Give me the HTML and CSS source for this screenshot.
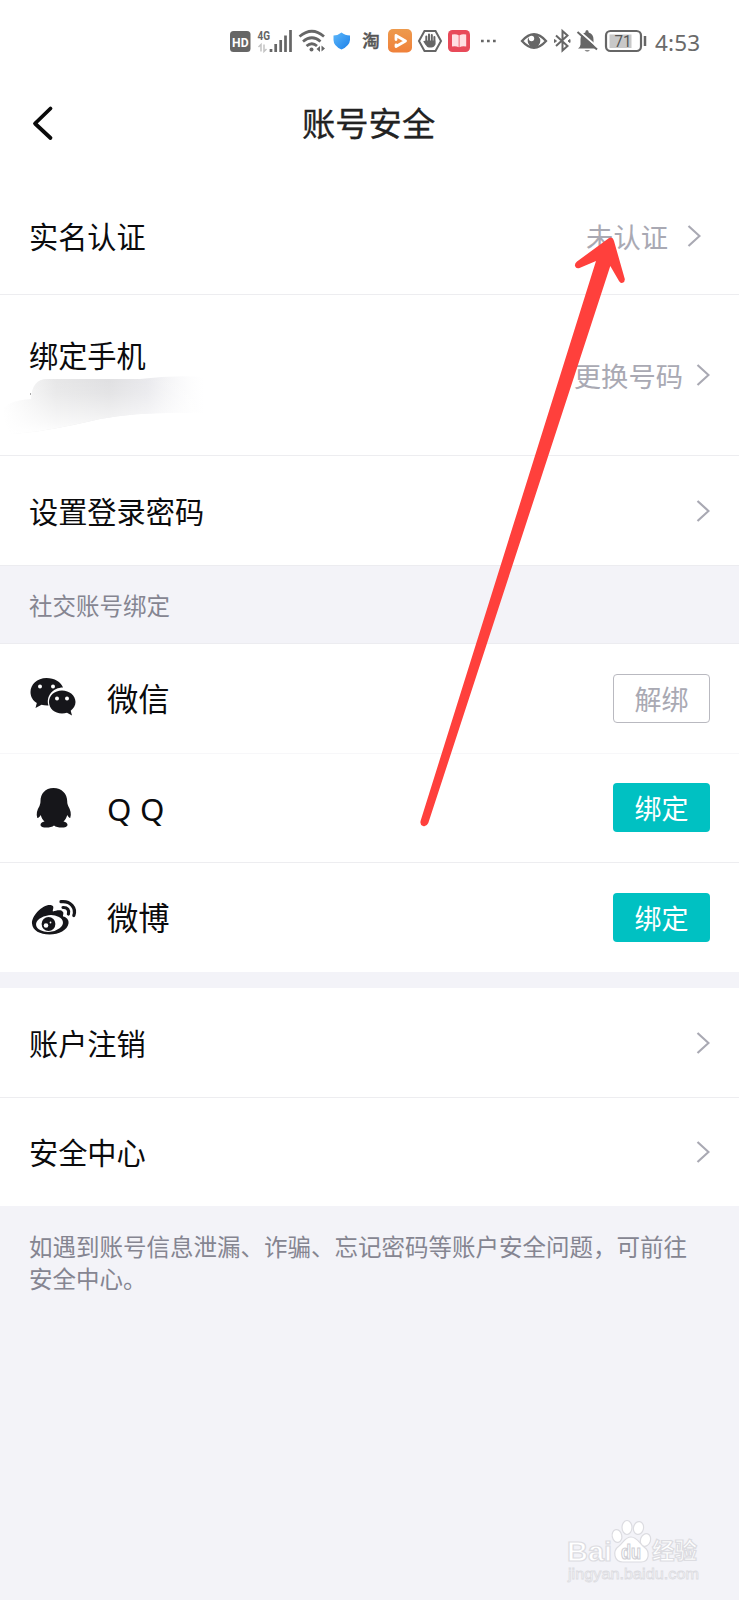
FILE: index.html
```html
<!DOCTYPE html>
<html lang="zh-CN">
<head>
<meta charset="utf-8">
<title>账号安全</title>
<link rel="stylesheet" href="styles.css">
</head>
<body>
<div class="screen">
  <header class="status">
    <svg class="status-left" width="270" height="30" viewBox="228 26 270 30">
      <rect x="230" y="31" width="20.500" height="21" rx="3.500" fill="#666"/>
      <text x="240.300" y="46.500" class="hd" text-anchor="middle" textLength="16.500" lengthAdjust="spacingAndGlyphs">HD</text>
      <text x="257.500" y="39.500" class="net" textLength="12.500" lengthAdjust="spacingAndGlyphs">4G</text>
      <path d="M258.500 47l2.500-2.500v7M264 44.500v7l2.500-2.500" fill="none" stroke="#c4c4c4" stroke-width="1.500"/>
      <path d="M271 49v3M275.700 44v8M280.700 40v12M285.500 35.500V52M290.500 30v22" stroke="#666" stroke-width="2.700"/>
      <path d="M299.500 36.500Q312 26 324 36.500M303 41.500Q312 34 320.500 41.500M306.500 46Q312 41.500 317 46" fill="none" stroke="#666" stroke-width="2.700"/>
      <circle cx="311.500" cy="49.500" r="2" fill="#666"/>
      <path d="M316.500 49l3.500-3v6zM321.500 45.500v6l3.500-3z" fill="#666"/>
      <defs>
        <linearGradient id="shield" x1="0" y1="0" x2="1" y2="1"><stop offset="0" stop-color="#5db8fb"/><stop offset="1" stop-color="#1b7fe8"/></linearGradient>
        <linearGradient id="play" x1="0" y1="0" x2="0" y2="1"><stop offset="0" stop-color="#ed9a4d"/><stop offset="1" stop-color="#f0813a"/></linearGradient>
      </defs>
      <path d="M341.500 32.500Q345 35.500 350 35.500V40Q349.500 46 341.500 49.500Q333.500 46 333.500 40V35.500Q338 35.500 341.500 32.500Z" fill="url(#shield)"/>
      <text x="362.300" y="47" class="tao">淘</text>
      <rect x="388" y="29" width="24" height="23.500" rx="5" fill="url(#play)"/>
      <path d="M396 39.500V35.500l9.500 5.500-9.500 5.500v-1.500" fill="none" stroke="#fff" stroke-width="2.800" stroke-linejoin="round" stroke-linecap="round"/>
      <path d="M424.500 31h11l5.500 10-5.500 10h-11l-5.500-10z" fill="none" stroke="#666" stroke-width="2"/>
      <path d="M426.300 36.500v7M429 34.500v8M431.800 35v8M434.400 37v7" stroke="#666" stroke-width="2" stroke-linecap="round"/>
      <path d="M425.300 40.500h10v4q-1 3-4 3h-2.500q-2-.5-3.500-3l-2-3q1-1.500 2 0z" fill="#666"/>
      <rect x="448" y="30" width="22" height="22" rx="4.500" fill="#e84a59"/>
      <path d="M452 34.500q4-1 6.700.7v12q-3-1.700-6.700-.7zM459.500 35.200q3-1.700 6.700-.7v12q-4-1-6.700.7z" fill="#ffe0e2"/>
      <path d="M481 41h2.700M487 41h2.700M493 41h2.700" stroke="#666" stroke-width="2.700"/>
    </svg>
    <svg class="status-right" width="128" height="30" viewBox="519 26 128 30">
      <path d="M522 41Q534 27.500 546 41Q534 54.500 522 41Z" fill="none" stroke="#666" stroke-width="2.300"/>
      <circle cx="534" cy="41" r="6.300" fill="#666"/><circle cx="531.500" cy="38.500" r="2.700" fill="#fff"/>
      <path d="M556 35.500l11.500 10.500-5 4.500V31l5 4.500L556 46" fill="none" stroke="#666" stroke-width="2"/>
      <path d="M554.500 39.500l2 1.500-2 1.500zM570 39.500l-2 1.500 2 1.500z" fill="#666" stroke="#666"/>
      <path d="M578 48.500q2.500-2 2.500-4v-5q0-5.500 4.800-7q0-2.500 1.700-2.500t1.700 2.500q4.800 1.500 4.800 7v5q0 2 2.500 4zM584.500 50.300h5.500q-2.700 2.500-5.500 0z" fill="#666"/>
      <path d="M578.500 30.500l20 17.500" stroke="#fff" stroke-width="2"/><path d="M577.500 32l19.500 17.500" stroke="#666" stroke-width="2"/>
      <rect x="606" y="31" width="35" height="20" rx="4.500" fill="#fff" stroke="#666" stroke-width="2.200"/>
      <rect x="609.500" y="34.500" width="22" height="13.500" fill="#c8c8c8"/>
      <path d="M645 36v10" stroke="#666" stroke-width="2.500"/>
      <text x="623" y="47.300" class="battery" text-anchor="middle" textLength="17" lengthAdjust="spacingAndGlyphs">71</text>
    </svg>
    <span class="clock">4:53</span>
  </header>
  <nav class="titlebar">
    <svg class="back" width="24" height="36" viewBox="0 0 24 36"><path d="M19.500 3.500L4 18.500L19.500 33" fill="none" stroke="#0a0a0a" stroke-width="3.800" stroke-linecap="round" stroke-linejoin="round"/></svg>
    <h1>账号安全</h1>
  </nav>
  <main>
    <div class="row verify"><span class="label">实名认证</span><span class="value">未认证</span><svg class="chev" viewBox="0 0 14 24"><path d="M1.500 2L12.500 12L1.500 22"/></svg></div>
    <div class="row phone line"><div class="phone-label"><span>绑定手机</span></div><span class="value">更换号码</span><svg class="chev" viewBox="0 0 14 24"><path d="M1.500 2L12.500 12L1.500 22"/></svg></div>
    <div class="row line"><span class="label">设置登录密码</span><svg class="chev" viewBox="0 0 14 24"><path d="M1.500 2L12.500 12L1.500 22"/></svg></div>
    <h2>社交账号绑定</h2>
    <div class="row social">
      <svg class="logo" width="50" height="44" viewBox="28 675 50 44" fill="#16161a"><path d="M46.500 676C37 676 30.500 682.500 30.500 690c0 4.700 2.300 8.500 6.300 11L35.500 706l6-3.200c2.200.6 4.500.8 7 .7-2.800-9.500 4.500-18 14.500-18C61 680 54.500 676 46.500 676Z"/><path d="M62 688.500c-7.500 0-13 5-13 11.500s5.500 11.500 13 11.500c1.800 0 3.500-.2 5-.8l5 2.800-1.300-4.800c3-2.300 4.800-5.200 4.800-8.700 0-6.500-6-11.500-13.500-11.500Z"/><g fill="#fff"><circle cx="40" cy="684.500" r="2"/><circle cx="53" cy="684.500" r="2"/><circle cx="57" cy="696.500" r="2"/><circle cx="67" cy="696.500" r="2"/></g></svg>
      <span class="label">微信</span><button class="btn ghost">解绑</button>
    </div>
    <div class="row social faint">
      <svg class="logo" width="50" height="44" viewBox="28 786 50 44" fill="#16161a"><path d="M53.500 788C45 788 40.500 794 40.500 801c0 2-.5 3.500-1 5-2.500 4-3.500 8-2.200 12 1.500 0 2.700-1.500 3.500-3 .6 3 2 5 3.700 6.500-2.500.6-4 1.800-4 3.200 0 4 10.500 3.500 13.500.8 3 2.700 13.500 3.200 13.500-.8 0-1.400-1.500-2.600-4-3.200 1.700-1.500 3-3.500 3.700-6.500.8 1.500 2 3 3 3 1.500-4 .3-8-2-12-.6-1.500-1-3-1-5C67.200 794 62 788 53.500 788Z"/></svg>
      <span class="qq">QQ</span><button class="btn">绑定</button>
    </div>
    <div class="row social line">
      <svg class="logo" width="50" height="44" viewBox="28 896 50 44"><path d="M52 905.500c3 1 0 5 1 6 3-.8 8-2.500 10 .5 1 1.500-.5 4 .2 4.500 3 .8 6 3 5.300 7-1 6.500-9.500 11-19 11-9.500 0-17-4-17.500-11C31.500 915 45 902.500 52 905.500Z" fill="#16161a"/><ellipse cx="49.500" cy="923.500" rx="13.500" ry="8.300" transform="rotate(-6 49.500 923.500)" fill="#fff"/><circle cx="48.500" cy="924" r="6.900" fill="#16161a"/><circle cx="46" cy="925.500" r="2.300" fill="#fff"/><circle cx="50.500" cy="922.500" r=".9" fill="#fff"/><path d="M61 901.700C70.500 900.500 76.500 908 73.800 915.500M63 907.500c4.500-.3 6.500 3 5.400 6.500" fill="none" stroke="#16161a" stroke-width="3.200" stroke-linecap="round"/></svg>
      <span class="label">微博</span><button class="btn">绑定</button>
    </div>
    <div class="gap"></div>
    <div class="row after-gap"><span class="label">账户注销</span><svg class="chev" viewBox="0 0 14 24"><path d="M1.500 2L12.500 12L1.500 22"/></svg></div>
    <div class="row line last"><span class="label">安全中心</span><svg class="chev" viewBox="0 0 14 24"><path d="M1.500 2L12.500 12L1.500 22"/></svg></div>
    <p class="note">如遇到账号信息泄漏、诈骗、忘记密码等账户安全问题，可前往安全中心。</p>
  </main>

  <svg class="smudge" width="225" height="70" viewBox="0 370 225 70">
    <defs>
      <linearGradient id="fadeX" x1="0" x2="1"><stop offset="0" stop-color="#e4e4e5" stop-opacity="0"/><stop offset=".25" stop-color="#e2e2e3" stop-opacity=".85"/><stop offset=".5" stop-color="#dfdfe1"/><stop offset=".68" stop-color="#e6e6ea" stop-opacity=".9"/><stop offset=".95" stop-color="#f8f8fa" stop-opacity="0"/></linearGradient>
      <linearGradient id="fadeY" x1="0" y1="0" x2="0" y2="1"><stop offset="0" stop-color="#fff" stop-opacity="0"/><stop offset=".3" stop-color="#fff" stop-opacity=".15"/><stop offset=".8" stop-color="#fff" stop-opacity=".7"/><stop offset="1" stop-color="#fff"/></linearGradient>
    </defs>
    <path d="M3 408Q12 400 31 399Q32 379 47 379H140Q180 374 215 378V414Q150 410 100 419Q45 432 12 434Q4 425 3 408Z" fill="url(#fadeX)"/>
    <path d="M3 408Q12 400 31 399Q32 379 47 379H140Q180 374 215 378V414Q150 410 100 419Q45 432 12 434Q4 425 3 408Z" fill="url(#fadeY)"/>
    <path d="M30.500 393v2" stroke="#aaa"/>
  </svg>
  <svg class="arrow" width="220" height="600" viewBox="415 232 220 600"><path d="M607 239.500Q612 235 614 241L624.800 279Q625 282 622.500 282.700Q620.500 283.500 619 281L610.300 266L428.300 823Q426.500 827 423 826Q419.500 824.500 420.700 820.500L596 261L579.500 268Q576 269 575 266Q574.500 263.500 577 261.500Z" fill="#ff403c"/></svg>
  <svg class="watermark" width="150" height="75" viewBox="560 1515 150 75">
    <g fill="#fff" stroke="#dcdce1" stroke-width="1.200">
      <text x="567" y="1561" class="wm-main" textLength="45" lengthAdjust="spacingAndGlyphs">Bai</text>
      <ellipse cx="617" cy="1536" rx="4.800" ry="6.500" transform="rotate(-12 617 1536)"/>
      <ellipse cx="627" cy="1527.500" rx="5" ry="7"/>
      <ellipse cx="638.500" cy="1528" rx="5" ry="6.500" transform="rotate(12 638.500 1528)"/>
      <ellipse cx="645.500" cy="1540" rx="5" ry="6.500" transform="rotate(20 645.500 1540)"/>
      <path d="M631 1537c-6 0-8 6-12 9-7 5-5 16 4 16h18c9 0 9-11 3-15-4-3-7-10-13-10Z"/>
      <text x="621" y="1558.500" class="wm-du" textLength="20" lengthAdjust="spacingAndGlyphs">du</text>
      <text x="652" y="1559" class="wm-cjk">经验</text>
      <text x="568" y="1579" class="wm-url" textLength="131" lengthAdjust="spacingAndGlyphs">jingyan.baidu.com</text>
    </g>
  </svg>
</div>
</body>
</html>
```
FILE: styles.css
```css
* { box-sizing: border-box; }
body { margin: 0; background: #f3f3f8; font-family: "Noto Sans CJK SC", sans-serif; color: #0b0b0d; }
.screen { position: relative; width: 739px; height: 1600px; overflow: hidden; background: #f3f3f8; }
svg { display: block; flex: none; }

.status { display: flex; height: 82px; padding: 26px 0 0 228px; background: #fff; }
.status-right { margin-left: 21px; }
.clock { margin-left: 8px; font: 22.5px/34px "Noto Sans", sans-serif; letter-spacing: .2px; color: #6a6a6a; }
.hd { font: 700 13.500px Roboto, sans-serif; fill: #fff; }
.net { font: 700 12px Roboto, sans-serif; fill: #666; }
.tao { font: 500 17.500px "Noto Sans CJK SC", sans-serif; fill: #555; stroke: #555; stroke-width: .4; }
.battery { font: 16.500px Roboto, sans-serif; fill: #555; }

.titlebar { display: flex; align-items: center; height: 96px; padding: 0 0 15px 31px; background: #fff; }
.titlebar h1 { margin: 0 0 2px 247px; font-size: 33.300px; font-weight: 400; line-height: 48px; color: #222; -webkit-text-stroke: .3px #222; }

.row { display: flex; align-items: center; height: 109px; padding: 0 29px; background: #fff; font-size: 29.200px; line-height: 44px; }
.label { padding-bottom: 2px; }
.line { height: 110px; border-top: 1px solid #ededf0; }
.faint { height: 109px; border-top: 1px solid #f7f7f9; }
.verify { height: 116px; padding-right: 38px; }
.phone { height: 161px; }
.phone-label { align-self: flex-start; padding-top: 37px; }
.value { margin-left: auto; font-size: 27.300px; color: #a9a9b3; }
.verify .value { padding-bottom: 1px; }
.chev { width: 14px; height: 24px; margin-left: auto; fill: none; stroke: #a9a9b3; stroke-width: 2.200; }
.value + .chev { margin-left: 19px; }
.phone .value + .chev { margin-left: 13px; }
.last { height: 109px; }

h2 { margin: 0; height: 79px; padding: 22px 29px 0; border: solid #ececf0; border-width: 1px 0; background: #f3f3f8; font-size: 23.500px; font-weight: 400; line-height: 34px; color: #858591; }
.social { font-size: 31.300px; }
.social:not(.line):not(.faint) { height: 109px; }
.logo { margin: 0 29px 0 -1px; }
.qq { padding-top: 1px; font-family: "Noto Sans", sans-serif; letter-spacing: 8.500px; }
.btn { width: 97px; height: 49px; margin-left: auto; padding: 0; border: 0; border-radius: 4px; background: #00c1c2; color: #fff; font: 27px/47px "Noto Sans CJK SC", sans-serif; }
.faint .btn { margin-bottom: 1px; }
.ghost { border: 1px solid #b9b9c0; background: #fff; color: #a9a9b3; }
.gap { height: 16px; background: #f3f3f8; }
.note { margin: 0; padding: 25px 29px; font-size: 23.500px; line-height: 31.500px; color: #858591; }

.smudge { position: absolute; left: 0; top: 370px; }
.arrow { position: absolute; left: 415px; top: 232px; }
.watermark { position: absolute; left: 560px; top: 1515px; }
.wm-main { font: 700 28px "Liberation Sans", sans-serif; }
.wm-du { font: 700 20px "Liberation Sans", sans-serif; stroke: #cfcfd5; }
.wm-cjk { font: 700 22.500px "Noto Sans CJK SC", sans-serif; }
.wm-url { font: 15px "Liberation Sans", sans-serif; stroke-width: .8; }
```
